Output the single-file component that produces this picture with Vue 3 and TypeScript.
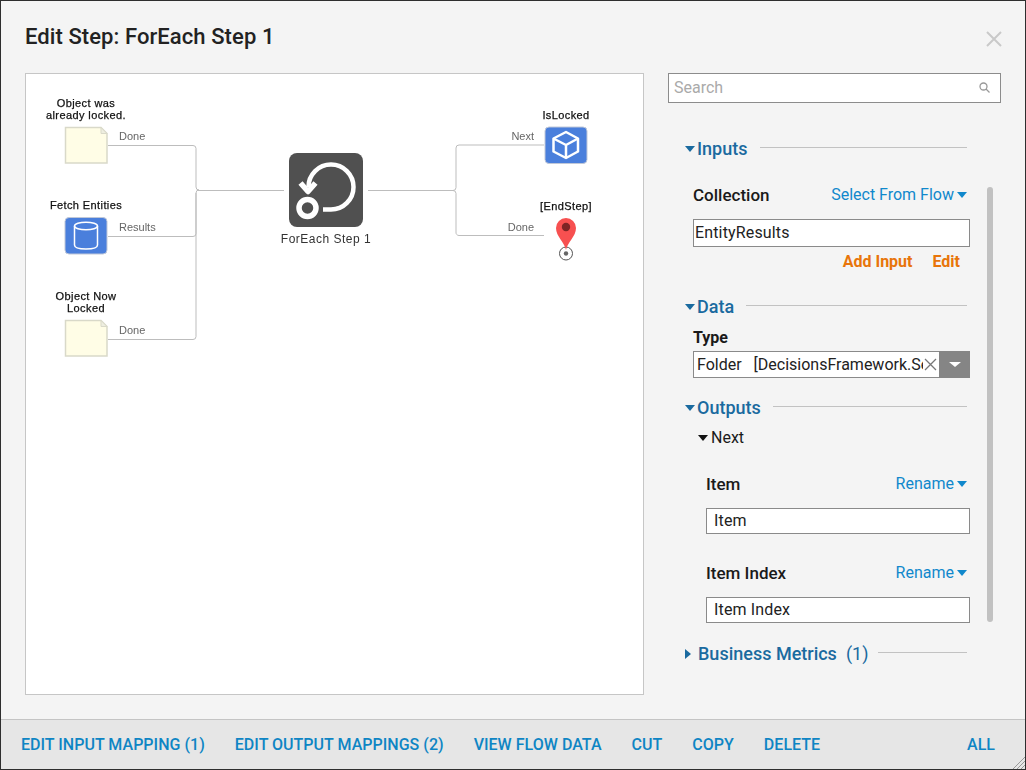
<script setup lang="ts">
const labels = [
  { x: 86, y: 107, t: 'Object was' },
  { x: 86, y: 119, t: 'already locked.' },
  { x: 86, y: 209, t: 'Fetch Entities' },
  { x: 86, y: 300, t: 'Object Now' },
  { x: 86, y: 312, t: 'Locked' },
  { x: 566, y: 119, t: 'IsLocked' },
  { x: 566, y: 210, t: '[EndStep]' },
]
const edges = [
  { x: 119, y: 140, t: 'Done', a: 'start' },
  { x: 119, y: 231, t: 'Results', a: 'start' },
  { x: 119, y: 334, t: 'Done', a: 'start' },
  { x: 534, y: 140, t: 'Next', a: 'end' },
  { x: 534, y: 231, t: 'Done', a: 'end' },
]
const docs = [127, 320]
const actions = ['EDIT INPUT MAPPING (1)', 'EDIT OUTPUT MAPPINGS (2)', 'VIEW FLOW DATA', 'CUT', 'COPY', 'DELETE']
</script>

<template>
  <div class="window">
    <header class="head">
      <h1>Edit Step: ForEach Step 1</h1>
      <svg class="close" width="16" height="16" viewBox="0 0 16 16"><path d="M1 1L15 15M15 1L1 15" /></svg>
    </header>

    <main class="main">
      <section class="canvas">
        <svg class="flow" width="617" height="620" viewBox="26 74 617 620">
          <g class="wire">
            <path d="M108 145.500H193a3 3 0 0 1 3 3V187a3 3 0 0 0 3 3" />
            <path d="M108 236.500H193a3 3 0 0 0 3-3V193a3 3 0 0 1 3-3" />
            <path d="M108 339.500H193a3 3 0 0 0 3-3V193" />
            <path d="M197 190.500H284" />
            <path d="M368 190.500H453a3 3 0 0 0 3-3V148a3 3 0 0 1 3-3H544" />
            <path d="M453 190.500a3 3 0 0 1 3 3V232a3 3 0 0 0 3 3.500H544" />
          </g>

          <g v-for="y in docs" :key="y" :transform="`translate(65 ${y})`">
            <path class="doc" d="M.5.5H36L42 6.500V36H.5Z" />
            <path class="fold" d="M36 .5V6.500H42Z" />
          </g>

          <rect class="blue" x="65" y="217.500" width="42" height="36.500" rx="4" />
          <g class="glyph" stroke-width="1.500">
            <ellipse cx="86" cy="226" rx="11.500" ry="3.800" />
            <path d="M74.500 226V245c0 2.500 5 4 11.500 4s11.500-1.500 11.500-4V226" />
          </g>

          <rect class="blue" x="545" y="127" width="42" height="36.500" rx="4" />
          <g class="glyph" stroke-width="2.500">
            <path d="M566 132L578 138.500V151.500L566 158L553.500 151.500V138.500Z" />
            <path d="M553.500 138.500L566 145L578 138.500M566 145V158" />
          </g>

          <rect x="289" y="153" width="74" height="74" rx="8" fill="#505050" />
          <g class="glyph" stroke-width="4.500">
            <path d="M323 209.500H331A22.500 22.500 0 1 0 308.500 187" />
            <path d="M300.500 183L308 191.500L315.500 183" stroke-width="5.500" />
            <circle cx="307.500" cy="208" r="8.500" stroke-width="5.500" />
          </g>

          <circle cx="566" cy="253.500" r="6.500" fill="none" stroke="#555" />
          <circle cx="566" cy="253.500" r="2.200" fill="#666" />
          <path d="M566 250C564.500 242 556 236.500 556 228A10 10 0 0 1 576 228C576 236.500 567.500 242 566 250Z" fill="#f75050" />
          <circle cx="566" cy="227" r="4.200" fill="#7d2424" />

          <g class="texts">
            <text v-for="l in labels" :key="l.t" class="lbl" :x="l.x" :y="l.y" text-anchor="middle">{{ l.t }}</text>
            <text v-for="e in edges" :key="e.x + e.t + e.y" class="edge" :x="e.x" :y="e.y" :text-anchor="e.a">{{ e.t }}</text>
            <text class="step" x="326" y="243" text-anchor="middle">ForEach Step 1</text>
          </g>
        </svg>
      </section>

      <aside class="side">
        <div class="search">
          <span>Search</span>
          <svg width="11" height="11" viewBox="0 0 11 11" fill="none" stroke="#999" stroke-width="1.300"><circle cx="4.500" cy="4.500" r="3.500" /><path d="M7 7L10.500 10.500" /></svg>
        </div>

        <div class="props">
          <div class="thumb"></div>

          <div class="sec">
            <i class="tri down"></i><span class="sec-name">Inputs</span><span class="rule"></span>
          </div>
          <div class="row row-coll">
            <b>Collection</b>
            <a class="menu">Select From Flow<i class="tri small"></i></a>
          </div>
          <div class="field coll-field">EntityResults</div>
          <div class="orange"><a>Add Input</a><a>Edit</a></div>

          <div class="sec sec-data">
            <i class="tri down"></i><span class="sec-name">Data</span><span class="rule"></span>
          </div>
          <div class="type"><b>Type</b></div>
          <div class="combo">
            <div class="combo-text"><span>Folder&nbsp;&nbsp; [DecisionsFramework.ServiceLayer</span></div>
            <svg class="combo-x" width="13" height="13" viewBox="0 0 13 13"><path d="M1 1L12 12M12 1L1 12" /></svg>
            <div class="combo-btn"><i class="tri white"></i></div>
          </div>

          <div class="sec sec-out">
            <i class="tri down"></i><span class="sec-name">Outputs</span><span class="rule"></span>
          </div>
          <div class="next"><i class="tri black"></i>Next</div>

          <div class="row row-item">
            <b>Item</b>
            <a class="menu">Rename<i class="tri small"></i></a>
          </div>
          <div class="field item-field">Item</div>
          <div class="row row-idx">
            <b>Item Index</b>
            <a class="menu">Rename<i class="tri small"></i></a>
          </div>
          <div class="field item-field">Item Index</div>

          <div class="sec sec-bm">
            <i class="tri right"></i><span class="sec-name">Business Metrics</span><span class="count">(1)</span><span class="rule"></span>
          </div>
        </div>
      </aside>
    </main>

    <footer class="foot">
      <a v-for="a in actions" :key="a">{{ a }}</a>
      <a class="all">ALL</a>
      <svg class="grip" width="13" height="13" viewBox="0 0 13 13"><path d="M13 1L1 13M13 5L5 13M13 9L9 13" /></svg>
    </footer>
  </div>
</template>

<style>
html, body { margin: 0; background: #f4f4f4; }
</style>

<style scoped>
.window {
  width: 1026px; height: 770px; box-sizing: border-box;
  border: 1px solid #2e2e2e;
  background: #f4f4f4;
  display: flex; flex-direction: column;
  font-family: Roboto, "Liberation Sans", sans-serif;
  overflow: hidden;
}
.head { height: 72px; flex: none; display: flex; align-items: flex-start; justify-content: space-between; padding: 0 23px 0 24px; box-sizing: border-box; }
h1 { margin: 23px 0 0; font-size: 22px; line-height: 26px; font-weight: 500; color: #222; letter-spacing: .08px; }
.close { margin: 30px 0 0; }
.close path { stroke: #c9c9c9; stroke-width: 2; fill: none; }

.main { flex: 1; display: flex; padding-left: 24px; min-height: 0; }
.canvas { width: 619px; height: 622px; box-sizing: border-box; background: #fff; border: 1px solid #c6c6c6; flex: none; }
.flow { display: block; }
.wire path { fill: none; stroke: #bdbdbd; stroke-width: 1; }
.doc { fill: #fffde6; stroke: #d9d9c9; stroke-width: 1.500; }
.fold { fill: #eeeee0; stroke: #d9d9c9; }
.blue { fill: #4a7fdc; stroke: #c0c8d8; stroke-width: 1; }
.glyph { fill: none; stroke: #fff; stroke-linejoin: round; }
.texts { filter: grayscale(1); }
.lbl { font: 11px "Liberation Sans", sans-serif; fill: #111; stroke: #111; stroke-width: .25px; letter-spacing: .4px; }
.edge { font: 11px "Liberation Sans", sans-serif; fill: #666; }
.step { font: 12px "Liberation Sans", sans-serif; fill: #333; letter-spacing: .5px; }

.side { width: 333px; margin-left: 24px; flex: none; }
.search {
  height: 30px; box-sizing: border-box; border: 1px solid #8c8c8c; background: #fff;
  display: flex; align-items: center; justify-content: space-between; padding: 0 10px 2px 5px;
  font-size: 16px; color: #aaa;
}
.props { position: relative; height: 580px; padding-top: 34px; box-sizing: border-box; }
.thumb { position: absolute; left: 319px; top: 84px; width: 6px; height: 435px; background: #c1c1c1; border-radius: 3px; }

.sec { display: flex; align-items: center; color: #1a6a9f; font-size: 18px; line-height: 24px; margin-left: 17px; width: 282px; }
.sec-name { font-weight: 500; margin-left: 2px; }
.rule { flex: 1; height: 1px; background: #c2c2c2; margin: -4px 0 0 12px; }
.count { margin-left: 9px; }
.sec-data { margin-top: 23px; }
.sec-out { margin-top: 18px; }
.sec-bm { margin-top: 19px; }
.sec-bm .rule { margin-left: 10px; }

.tri { display: inline-block; width: 0; height: 0; flex: none; border-style: solid; border-color: transparent; }
.down { border-width: 6px 5.500px 0; border-top-color: #1a6a9f; }
.right { border-width: 5.500px 0 5.500px 6px; border-left-color: #1a6a9f; margin-right: 5px; }
.small { border-width: 6px 5.500px 0; border-top-color: #1088cc; margin-left: 3px; vertical-align: 2px; }
.black { border-width: 6px 5.500px 0; border-top-color: #111; margin-right: 3px; vertical-align: 2px; }
.white { border-width: 5px 6px 0; border-top-color: #fff; }

.row { display: flex; justify-content: space-between; align-items: flex-start; height: 22px; line-height: 22px; font-size: 16px; width: 274px; margin-left: 25px; }
.row b { font-weight: 500; color: #1a1a1a; font-size: 17px; line-height: 20px; }
.type b { font-weight: 700; color: #1a1a1a; font-size: 16px; }
.menu { color: #1088cc; white-space: nowrap; margin-top: -1px; }
.row-coll { margin-top: 24px; }
.row-item { margin: 25px 0 0 38px; width: 261px; }
.row-idx { margin: 29px 0 0 38px; width: 261px; }

.field { box-sizing: border-box; background: #fff; border: 1px solid #8a8a8a; font-size: 16px; color: #222; letter-spacing: .15px; }
.coll-field { margin: 12px 0 0 25px; width: 277px; height: 28px; line-height: 26px; padding-left: 1px; }
.item-field { margin: 12px 0 0 38px; width: 264px; height: 26px; line-height: 24px; padding-left: 7px; }

.orange { display: flex; justify-content: flex-end; gap: 20px; width: 292px; color: #e8750a; font-size: 16px; font-weight: 700; line-height: 20px; margin-top: 5px; }

.type { margin: 8px 0 0 25px; line-height: 22px; }
.combo { display: flex; align-items: center; margin: 2px 0 0 25px; width: 277px; height: 27px; box-sizing: border-box; border: 1px solid #8a8a8a; border-right: 0; background: #fff; font-size: 16px; color: #222; }
.combo-text { width: 229px; overflow: hidden; white-space: nowrap; padding-left: 3px; box-sizing: border-box; flex: none; }
.combo-x { margin-left: 1px; flex: none; }
.combo-x path { stroke: #777; stroke-width: 1.300; fill: none; }
.combo-btn { margin-left: auto; width: 31px; height: 27px; flex: none; background: #858585; display: flex; align-items: center; justify-content: center; margin-top: -2px; margin-bottom: -2px; }

.next { font-size: 16px; color: #1a1a1a; margin: 7px 0 0 30px; line-height: 22px; }

.foot { margin-top: auto; height: 50px; padding: 0 30px 0 20px; flex: none; box-sizing: border-box; background: #e6e6e6; border-top: 1px solid #c4c4c4; display: flex; align-items: center; gap: 30px; position: relative; color: #0e85c4; font-size: 16px; font-weight: 500; letter-spacing: .025px; }
.all { margin-left: auto; }
.grip { position: absolute; right: 0; bottom: 0; }
.grip path { stroke: #999; fill: none; }
</style>
